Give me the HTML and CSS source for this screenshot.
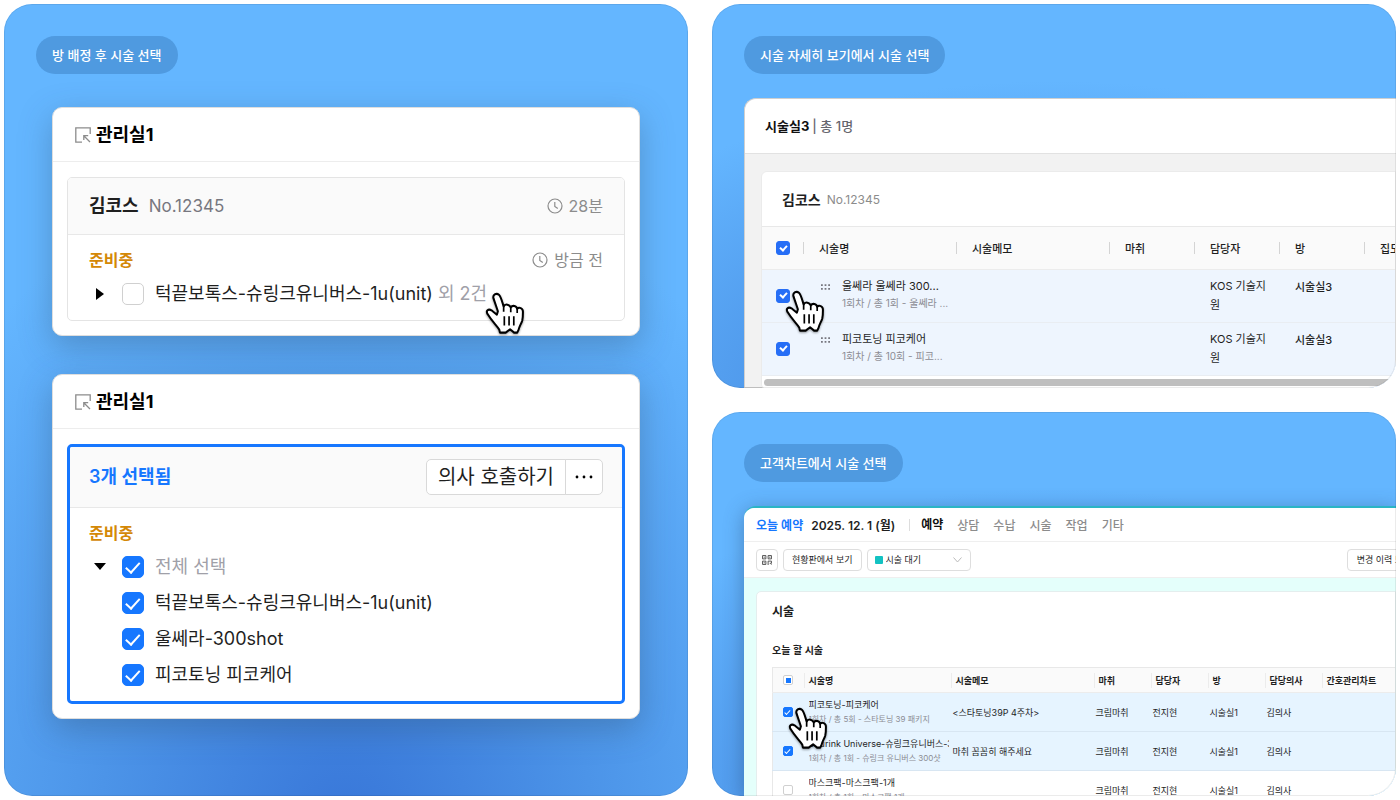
FILE: index.html
```html
<!DOCTYPE html>
<html lang="ko">
<head>
  <meta charset="UTF-8" />
  <meta name="viewport" content="width=device-width, initial-scale=1.0"/>
  <title>시술 선택</title>
  <link rel="stylesheet" href="styles.css">
</head>
<body>

  <svg class="symbols" aria-hidden="true">
    <symbol id="hand" viewBox="0 0 116 130">
      <path d="M24 19C21 8 32 2 40 8C46 13 50 30 54 43C58 34 72 36 75 46C80 38 92 40 94 50C99 44 111 47 111 58C111 68 111 76 109 84C106 94 100 102 98 112L94 120H85L73 110L60 120H43L41 111C32 98 19 86 7 66C0 55 9 49 18 54L34 67L37 57Z" fill="#fff" stroke="#000" stroke-width="6" stroke-linejoin="round"/>
      <path d="M54 43V58M75 46V60M94 50V62M56 72V99M70 72V99M84 72V99" fill="none" stroke="#000" stroke-width="5"/>
    </symbol>
    <symbol id="room" viewBox="0 0 16 16">
      <path d="M15.2 7V.8H.8v14.4H7M9 9l6 6M8.800 13V8.600h4.400" fill="none" stroke="currentColor" stroke-width="1.3"/>
    </symbol>
    <symbol id="clock" viewBox="0 0 16 16">
      <circle cx="8" cy="8" r="7" fill="none" stroke="currentColor" stroke-width="1.2"/>
      <path d="M7.8 4v4.4l3 2.2" fill="none" stroke="currentColor" stroke-width="1.2"/>
    </symbol>
    <symbol id="drag" viewBox="0 0 10 6">
      <path d="M0 0h2v2H0zM4 0h2v2H4zM8 0h2v2H8zM0 4h2v2H0zM4 4h2v2H4zM8 4h2v2H8z" fill="#77777f"/>
    </symbol>
  </svg>

  <main class="board">

    <section class="panel panel-tall">
      <h2 class="pill">방 배정 후 시술 선택</h2>

      <div class="cards">
        <article class="card">
          <header class="card-head">
            <svg class="icon"><use href="#room"/></svg>
            <h3>관리실1</h3>
          </header>
          <div class="patient">
            <div class="patient-head">
              <strong>김코스</strong>
              <span class="number">No.12345</span>
              <span class="time"><svg class="icon"><use href="#clock"/></svg>28분</span>
            </div>
            <div class="patient-body">
              <div class="status-row">
                <span class="status">준비중</span>
                <span class="time"><svg class="icon"><use href="#clock"/></svg>방금 전</span>
              </div>
              <div class="item">
                <button class="toggle" aria-label="펼치기"><svg viewBox="0 0 8 12"><path d="M0 0l8 6-8 6z"/></svg></button>
                <input type="checkbox" class="check" id="t0">
                <label for="t0">턱끝보톡스-슈링크유니버스-1u(unit) <span class="muted">외 2건</span></label>
              </div>
            </div>
          </div>
          <svg class="hand hand-card"><use href="#hand"/></svg>
        </article>

        <article class="card">
          <header class="card-head">
            <svg class="icon"><use href="#room"/></svg>
            <h3>관리실1</h3>
          </header>
          <div class="patient selected">
            <div class="patient-head">
              <strong>3개 선택됨</strong>
              <div class="btn-group">
                <button>의사 호출하기</button>
                <button class="more" aria-label="더보기"><svg viewBox="0 0 18 4"><circle cx="2" cy="2" r="1.4"/><circle cx="9" cy="2" r="1.4"/><circle cx="16" cy="2" r="1.4"/></svg></button>
              </div>
            </div>
            <div class="patient-body">
              <div class="status-row">
                <span class="status">준비중</span>
              </div>
              <div class="item">
                <button class="toggle" aria-label="접기"><svg viewBox="0 0 12 8"><path d="M0 0h12l-6 7z"/></svg></button>
                <input type="checkbox" class="check" id="t1" checked>
                <label for="t1" class="muted">전체 선택</label>
              </div>
              <div class="item sub">
                <input type="checkbox" class="check" id="t2" checked>
                <label for="t2">턱끝보톡스-슈링크유니버스-1u(unit)</label>
              </div>
              <div class="item sub">
                <input type="checkbox" class="check" id="t3" checked>
                <label for="t3">울쎄라-300shot</label>
              </div>
              <div class="item sub">
                <input type="checkbox" class="check" id="t4" checked>
                <label for="t4">피코토닝 피코케어</label>
              </div>
            </div>
          </div>
        </article>
      </div>
    </section>

    <section class="panel">
      <h2 class="pill">시술 자세히 보기에서 시술 선택</h2>

      <div class="window detail">
        <h3 class="detail-title">시술실3 <span>| 총 1명</span></h3>
        <div class="detail-card">
          <div class="detail-patient"><strong>김코스</strong><span>No.12345</span></div>
          <table class="detail-table">
            <colgroup>
              <col class="c-check"><col class="c-name"><col class="c-name"><col class="c-s"><col class="c-s"><col class="c-s"><col class="c-last">
            </colgroup>
            <thead>
              <tr>
                <th><input type="checkbox" class="check small" aria-label="전체 선택" checked></th>
                <th>시술명</th>
                <th>시술메모</th>
                <th>마취</th>
                <th>담당자</th>
                <th>방</th>
                <th>집도의</th>
              </tr>
            </thead>
            <tbody>
              <tr>
                <td><input type="checkbox" class="check small" id="d1" checked></td>
                <td>
                  <div class="drag-cell">
                    <svg class="drag"><use href="#drag"/></svg>
                    <label for="d1">울쎄라 울쎄라 300...<small>1회차 / 총 1회 - 울쎄라 ...</small></label>
                  </div>
                </td>
                <td></td>
                <td></td>
                <td>KOS 기술지원</td>
                <td class="room">시술실3</td>
                <td></td>
              </tr>
              <tr>
                <td><input type="checkbox" class="check small" id="d2" checked></td>
                <td>
                  <div class="drag-cell">
                    <svg class="drag"><use href="#drag"/></svg>
                    <label for="d2">피코토닝 피코케어<small>1회차 / 총 10회 - 피코...</small></label>
                  </div>
                </td>
                <td></td>
                <td></td>
                <td>KOS 기술지원</td>
                <td class="room">시술실3</td>
                <td></td>
              </tr>
            </tbody>
          </table>
          <div class="scrollbar"></div>
        </div>
        <svg class="hand hand-detail"><use href="#hand"/></svg>
      </div>
    </section>

    <section class="panel">
      <h2 class="pill">고객차트에서 시술 선택</h2>

      <div class="window chart">
        <nav class="chart-nav">
          <strong class="today">오늘 예약</strong>
          <strong class="date">2025. 12. 1 (월)</strong>
          <a href="#" class="active">예약</a>
          <a href="#">상담</a>
          <a href="#">수납</a>
          <a href="#">시술</a>
          <a href="#">작업</a>
          <a href="#">기타</a>
        </nav>
        <div class="toolbar">
          <button class="qr" aria-label="QR 코드">
            <svg viewBox="0 0 9 9"><path d="M.5.5h3v3h-3zM5.500.5h3v3h-3zM.5 5.500h3v3h-3zM5.500 9V5.500h3v2h-1.500M8 9h1M2 1.500v1M7 1.500v1M2 6.500v1" fill="none" stroke="#444" stroke-width="0.8"/></svg>
          </button>
          <button>현황판에서 보기</button>
          <div class="select">
            <span class="dot"></span>
            <select aria-label="상태"><option>시술 대기</option></select>
            <svg viewBox="0 0 9 6"><path d="M.5.5l4 4.500 4-4.500" fill="none" stroke="#bbb"/></svg>
          </div>
          <button class="history">변경 이력 보기</button>
        </div>
        <div class="chart-body">
          <div class="chart-card">
            <h3>시술</h3>
            <h4>오늘 할 시술</h4>
            <table class="chart-table">
              <colgroup>
                <col class="k-check"><col class="k-name"><col class="k-memo"><col class="k-s"><col class="k-s"><col class="k-s"><col class="k-s"><col class="k-last">
              </colgroup>
              <thead>
                <tr>
                  <th><input type="checkbox" class="check tiny partial" aria-label="전체 선택"></th>
                  <th>시술명</th>
                  <th>시술메모</th>
                  <th>마취</th>
                  <th>담당자</th>
                  <th>방</th>
                  <th>담당의사</th>
                  <th>간호관리차트</th>
                </tr>
              </thead>
              <tbody>
                <tr class="on">
                  <td><input type="checkbox" class="check tiny" id="k1" checked></td>
                  <td><label for="k1">피코토닝-피코케어<small>1회차 / 총 5회 - 스타토닝 39 패키지</small></label></td>
                  <td>&lt;스타토닝39P 4주차&gt;</td>
                  <td>크림마취</td>
                  <td>전지현</td>
                  <td>시술실1</td>
                  <td>김의사</td>
                  <td></td>
                </tr>
                <tr class="on">
                  <td><input type="checkbox" class="check tiny" id="k2" checked></td>
                  <td><label for="k2">Shurink Universe-슈링크유니버스-300샷<small>1회차 / 총 1회 - 슈링크 유니버스 300샷</small></label></td>
                  <td>마취 꼼꼼히 해주세요</td>
                  <td>크림마취</td>
                  <td>전지현</td>
                  <td>시술실1</td>
                  <td>김의사</td>
                  <td></td>
                </tr>
                <tr>
                  <td><input type="checkbox" class="check tiny" id="k3"></td>
                  <td><label for="k3">마스크팩-마스크팩-1개<small>1회차 / 총 1회 - 마스크팩 1개</small></label></td>
                  <td></td>
                  <td>크림마취</td>
                  <td>전지현</td>
                  <td>시술실1</td>
                  <td>김의사</td>
                  <td></td>
                </tr>
              </tbody>
            </table>
          </div>
        </div>
        <svg class="hand hand-chart"><use href="#hand"/></svg>
      </div>
    </section>

  </main>

</body>
</html>
```
FILE: styles.css
```css
* {
  box-sizing: border-box;
}

body {
  font-family: Inter, "Noto Sans CJK KR", sans-serif;
  color: #1f1f1f;
  background: white;
  margin: 0;
}

h2, h3, h4 {
  margin: 0;
}

button, select {
  font-family: inherit;
  color: inherit;
  background: white;
  border: 1px solid #d9d9d9;
  margin: 0;
  cursor: pointer;
}

.symbols {
  display: none;
}

.board {
  display: grid;
  grid-template-columns: 1fr 1fr;
  grid-template-rows: minmax(0, 1fr) minmax(0, 1fr);
  gap: 24px;
  height: 100vh;
  min-height: 800px;
  padding: 4px;
}

.panel {
  position: relative;
  display: flex;
  flex-direction: column;
  align-items: flex-start;
  min-width: 0;
  padding: 32px 0 0 32px;
  border-radius: 28px;
  overflow: hidden;
  background: radial-gradient(ellipse 80% 85% at 50% 105%, #3876d8 0%, #4c94e8 45%, #64b6ff 100%);
}

.panel::after {
  content: "";
  position: absolute;
  inset: 0;
  border: 1px solid rgba(0,0,0,0.08);
  border-radius: 28px;
  pointer-events: none;
}

.panel-tall {
  grid-row: span 2;
  padding: 32px;
}

.pill {
  flex: none;
  padding: 0 16px;
  border-radius: 19px;
  background: #4f9ae0;
  color: white;
  font-size: 13px;
  font-weight: 500;
  line-height: 38px;
}

/* checkboxes */
.check {
  appearance: none;
  flex: none;
  display: flex;
  align-items: center;
  justify-content: center;
  width: 22px;
  height: 22px;
  margin: 0;
  border: 1px solid #d0d0d0;
  border-radius: 5px;
  background: white;
}

.check:checked {
  border-color: #1677ff;
  background: #1677ff;
}

.check:checked::after {
  content: "";
  width: 28%;
  height: 58%;
  margin-top: -12%;
  border: solid white;
  border-width: 0 2px 2px 0;
  transform: rotate(42deg);
}

.check.small {
  width: 14px;
  height: 14px;
  border-radius: 3px;
}

.check.small:checked {
  border-color: #266ef6;
  background: #266ef6;
}

.check.small:checked::after {
  width: 3px;
  height: 5px;
}

.check.tiny {
  width: 10px;
  height: 10px;
  border-radius: 2px;
}

.check.tiny:checked::after {
  border-width: 0 1px 1px 0;
}

.check.partial::after {
  content: "";
  width: 5px;
  height: 5px;
  background: #1677ff;
}

/* pointer */
.hand {
  position: absolute;
  width: 40px;
  height: 44px;
  filter: drop-shadow(0 1px 1px rgba(0,0,0,0.4));
}

.hand-card {
  right: 114px;
  bottom: -1px;
}

.hand-detail {
  left: 40px;
  top: 191px;
}

.hand-chart {
  left: 44px;
  top: 199px;
}

/* room cards */
.cards {
  display: flex;
  flex-direction: column;
  gap: 38px;
  align-self: stretch;
  padding: 33px 16px 0;
}

.card {
  position: relative;
  padding-bottom: 14px;
  border: 1px solid #dedede;
  border-radius: 10px;
  background: white;
  box-shadow: 0 10px 32px rgba(50,80,110,0.35);
}

.card-head {
  display: flex;
  align-items: center;
  gap: 5px;
  height: 54px;
  padding: 0 22px;
  border-bottom: 1px solid #ededed;
}

.card-head h3 {
  color: black;
  font-size: 18px;
  font-weight: 700;
  line-height: 24px;
}

.icon {
  width: 16px;
  height: 16px;
  color: #8c8c8c;
}

.patient {
  margin: 15px 14px 0;
  border: 1px solid #e4e4e4;
  border-radius: 5px;
  overflow: hidden;
}

.patient-head {
  display: flex;
  align-items: center;
  gap: 10px;
  height: 57px;
  padding: 0 21px;
  border-bottom: 1px solid #e8e8e8;
  background: #fafafa;
  font-size: 18px;
  line-height: 24px;
}

.patient-head strong {
  font-weight: 600;
}

.number {
  color: #77777f;
  font-size: 17px;
}

.time {
  display: flex;
  align-items: center;
  gap: 6px;
  margin-left: auto;
  color: #8c8c8c;
  font-size: 16px;
}

.patient-body {
  padding: 13px 21px 8px;
}

.status-row {
  display: flex;
  margin-bottom: 4px;
  line-height: 24px;
}

.status {
  color: #d48806;
  font-size: 16px;
  font-weight: 600;
}

.item {
  display: flex;
  align-items: center;
  height: 36px;
  gap: 11px;
  line-height: 24px;
  font-size: 18px;
}

.item.sub {
  padding-left: 33px;
}

.muted {
  color: #a0a0a8;
}

.toggle {
  display: flex;
  align-items: center;
  justify-content: center;
  width: 22px;
  height: 22px;
  padding: 0;
  border: 0;
}

.toggle svg {
  width: 12px;
  height: 12px;
}

.selected {
  border: 3px solid #1677ff;
}

.selected .patient-head {
  height: 61px;
  padding: 0 19px;
}

.selected .patient-head strong {
  color: #1677ff;
}

.selected .patient-body {
  padding: 13px 19px 8px;
}

.btn-group {
  display: flex;
  margin-left: auto;
}

.btn-group button {
  height: 36px;
  padding: 0 11px;
  border-radius: 5px 0 0 5px;
  font-size: 20px;
  line-height: 32px;
}

.btn-group .more {
  width: 38px;
  margin-left: -1px;
  padding: 0 9px;
  border-radius: 0 5px 5px 0;
}

.more svg {
  display: block;
  width: 18px;
  height: 4px;
}

/* shared by the two clipped windows */
.window {
  position: relative;
  flex: 1;
  align-self: stretch;
  min-height: 0;
  margin-top: 24px;
  border-radius: 12px 0 0 0;
}

.window table {
  border-collapse: collapse;
  table-layout: fixed;
}

.window th, .window td {
  text-align: left;
}

small {
  display: block;
  color: #8c8c94;
}

/* treatment detail */
.detail {
  border: 1px solid #cfcfcf;
  border-right: 0;
  background: #f2f2f2;
}

.detail-title {
  height: 55px;
  padding-left: 20px;
  border-bottom: 1px solid #e2e2e2;
  border-radius: 12px 0 0 0;
  background: white;
  color: #111;
  font-size: 13px;
  font-weight: 700;
  line-height: 54px;
}

.detail-title span {
  color: #66666e;
  font-weight: 500;
}

.detail-card {
  margin: 17px 0 0 16px;
  border: 1px solid #ebebeb;
  border-radius: 6px 0 0 6px;
  background: white;
  overflow: hidden;
}

.detail-patient {
  display: flex;
  align-items: center;
  gap: 6px;
  height: 55px;
  padding-left: 20px;
  border-bottom: 1px solid #e8e8e8;
  font-size: 14px;
}

.detail-patient strong {
  font-weight: 600;
}

.detail-patient span {
  color: #8c8c8c;
  font-size: 12px;
}

.detail-table {
  width: 724px;
  font-size: 11px;
}

.c-check {
  width: 41px;
}

.c-name {
  width: 153px;
}

.c-s {
  width: 85px;
}

.detail-table th {
  position: relative;
  height: 42px;
  padding: 0 0 0 16px;
  background: #fafafa;
  border-bottom: 1px solid #ececec;
  font-weight: 500;
}

.detail-table th + th::before {
  content: "";
  position: absolute;
  left: 0;
  top: 15px;
  width: 1px;
  height: 12px;
  background: #d4d4d4;
}

.detail-table td {
  height: 53px;
  padding: 7px 8px 7px 16px;
  border-bottom: 1px solid #e9edf2;
  background: #eef5fe;
  line-height: 19px;
  vertical-align: top;
}

.detail-table th:first-child, .detail-table td:first-child {
  padding: 0 0 0 14px;
  vertical-align: middle;
}

.detail-table .room {
  padding-top: 8px;
  padding-bottom: 0;
  font-weight: 500;
}

.detail-table small {
  font-size: 10px;
  line-height: 15px;
}

.drag-cell {
  display: flex;
  gap: 12px;
  padding-left: 2px;
  white-space: nowrap;
}

.drag {
  flex: none;
  width: 9px;
  height: 6px;
  margin-top: 7px;
}

.scrollbar {
  height: 7px;
  margin: 3px 0 3px 2px;
  border-radius: 4px;
  background: #bfbfbf;
}

/* customer chart */
.chart {
  border-top: 2px solid #2bb5c5;
  background: #e4fffb;
  box-shadow: 0 4px 20px rgba(40,70,110,0.45);
}

.chart-nav {
  display: flex;
  align-items: center;
  gap: 14px;
  height: 34px;
  padding-left: 12px;
  border-bottom: 1px solid #efefef;
  border-radius: 10px 0 0 0;
  background: white;
  font-size: 12px;
}

.chart-nav a {
  color: #8c8c8c;
  font-weight: 500;
  text-decoration: none;
}

.chart-nav strong {
  font-weight: 600;
}

.chart-nav .today {
  margin-right: -6px;
  color: #1677ff;
}

.chart-nav .active {
  padding-left: 11px;
  border-left: 1px solid #ddd;
  color: #111;
  font-weight: 600;
  line-height: 12px;
}

.toolbar {
  display: flex;
  align-items: center;
  gap: 5px;
  height: 36px;
  padding-left: 12px;
  border-bottom: 1px solid #efefef;
  background: white;
  overflow: hidden;
}

.toolbar button, .select {
  flex: none;
  height: 22px;
  border: 1px solid #dedede;
  border-radius: 4px;
  font-size: 9px;
  line-height: 18px;
}

.toolbar button {
  padding: 0 8px;
  white-space: nowrap;
}

.toolbar .qr {
  width: 22px;
  padding: 0 5px;
}

.qr svg {
  display: block;
  width: 10px;
  height: 10px;
}

.select {
  display: flex;
  align-items: center;
  width: 104px;
  padding: 0 8px 0 7px;
}

.select select {
  appearance: none;
  flex: 1;
  padding: 0 0 0 3px;
  border: 0;
  font-size: 9px;
}

.select svg {
  width: 9px;
  height: 6px;
}

.dot {
  width: 8px;
  height: 8px;
  border-radius: 1px;
  background: #13c2c2;
}

.toolbar .history {
  width: 74px;
  margin: 0 -25px 0 auto;
}

.chart-body {
  padding: 13px 0 0 12px;
}

.chart-card {
  height: 260px;
  padding: 12px 0 0 15px;
  border: 1px solid #e4eeee;
  border-radius: 5px 0 0 0;
  background: white;
  overflow: hidden;
}

.chart-card h3 {
  font-size: 12px;
  font-weight: 600;
  line-height: 16px;
}

.chart-card h4 {
  margin: 23px 0 10px;
  font-size: 10px;
  font-weight: 600;
  line-height: 14px;
}

.chart-table {
  width: 700px;
  border: 1px solid #e8e8e8;
  font-size: 9px;
}

.k-check {
  width: 31px;
}

.k-name {
  width: 147px;
}

.k-memo {
  width: 143px;
}

.k-s {
  width: 57px;
}

.chart-table th {
  height: 25px;
  padding: 0 0 0 5px;
  background: linear-gradient(#ececec, #ececec) 0 50% / 1px 15px no-repeat #fafafa;
  border-bottom: 1px solid #ececec;
  font-weight: 600;
}

.chart-table td {
  height: 39px;
  padding: 0 0 0 2px;
  border-bottom: 1px solid #d8e6f2;
  overflow: hidden;
  white-space: nowrap;
}

.chart-table td:nth-child(2) {
  padding-left: 5px;
}

.chart-table td:first-child, .chart-table th:first-child {
  padding-left: 10px;
  background-image: none;
}

.chart-table label {
  display: block;
  margin-right: 2px;
  overflow: hidden;
  line-height: 14px;
}

.chart-table small {
  font-size: 8px;
}

.on td {
  background: #e6f4ff;
}
```
